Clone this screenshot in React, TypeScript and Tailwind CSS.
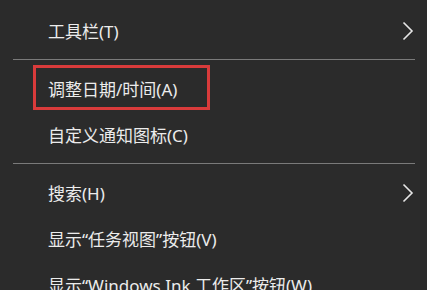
import React from "react";

type MenuItem = {
  label: string;
  submenu?: boolean;
  highlighted?: boolean;
};

const groups: MenuItem[][] = [
  [{ label: "工具栏(T)", submenu: true }],
  [{ label: "调整日期/时间(A)", highlighted: true }, { label: "自定义通知图标(C)" }],
  [
    { label: "搜索(H)", submenu: true },
    { label: "显示“任务视图”按钮(V)" },
    { label: "显示“Windows Ink 工作区”按钮(W)" },
  ],
];

const Chevron = () => (
  <svg width="12" height="20" viewBox="0 0 12 20" className="absolute right-[13px] top-[13px]">
    <path d="M1.5 1.5 L10 10 L1.5 18.5" fill="none" stroke="#e6e6e6" strokeWidth="1.6" />
  </svg>
);

const Row = ({ item }: { item: MenuItem }) => (
  <div className="relative h-[46px] flex items-center pl-[48px]">
    <span className="text-[17px] text-[#ececec] leading-none whitespace-nowrap">{item.label}</span>
    {item.submenu && <Chevron />}
    {item.highlighted && (
      <div className="absolute left-[33px] top-[-1px] w-[177px] h-[45px] border-[3px] border-[#d93b3b]" />
    )}
  </div>
);

export default function App() {
  return (
    <div
      className="w-[427px] h-[290px] overflow-hidden bg-[#2b2b2b] pt-[8px]"
      style={{ fontFamily: '"Noto Sans", "Noto Sans CJK SC", sans-serif' }}
    >
      {groups.map((group, gi) => (
        <React.Fragment key={gi}>
          {gi > 0 && <div className="ml-[13px] mr-[12px] mt-[5px] mb-[6px] h-px bg-[#7a7a7a]" />}
          {group.map((item) => (
            <Row key={item.label} item={item} />
          ))}
        </React.Fragment>
      ))}
    </div>
  );
}
